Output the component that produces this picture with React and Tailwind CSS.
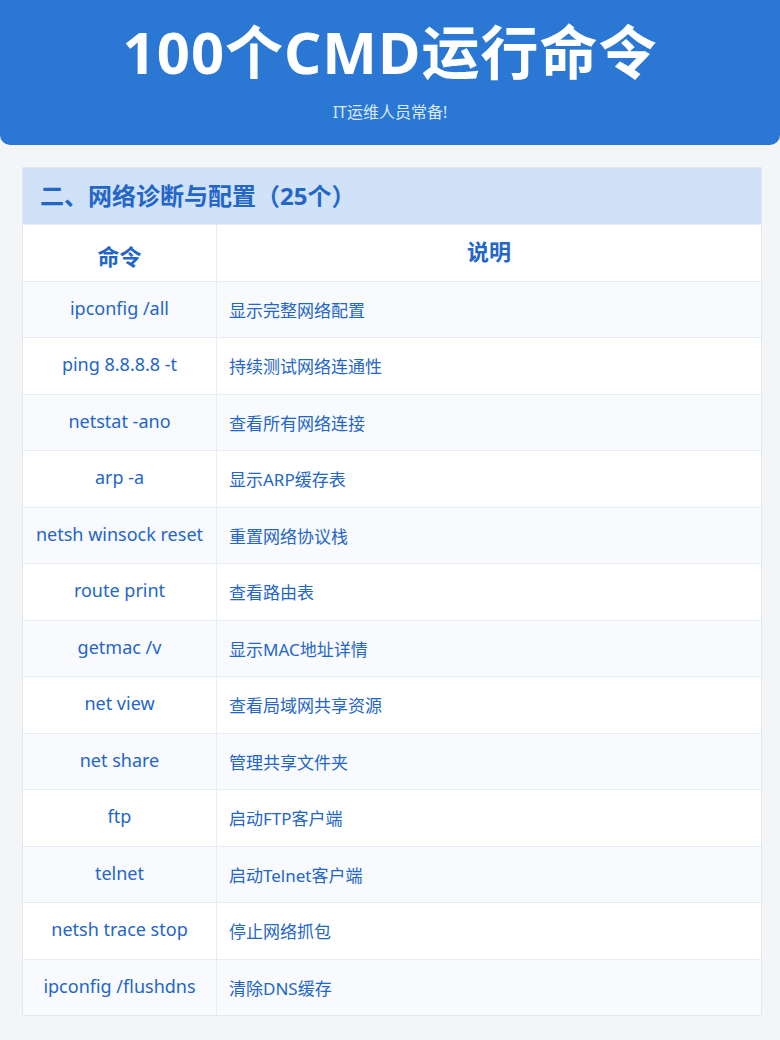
const rows=[["ipconfig /all","显示完整网络配置"],["ping 8.8.8.8 -t","持续测试网络连通性"],["netstat -ano","查看所有网络连接"],["arp -a","显示ARP缓存表"],["netsh winsock reset","重置网络协议栈"],["route print","查看路由表"],["getmac /v","显示MAC地址详情"],["net view","查看局域网共享资源"],["net share","管理共享文件夹"],["ftp","启动FTP客户端"],["telnet","启动Telnet客户端"],["netsh trace stop","停止网络抓包"],["ipconfig /flushdns","清除DNS缓存"]];
export default function App(){
return <div className="w-[780px] h-[1040px] bg-[#f4f5f6] overflow-hidden" style={{fontFamily:'"Noto Sans","Noto Sans CJK SC",sans-serif'}}>
<div className="h-[145px] bg-[#2b78d4] rounded-b-[10px] flex flex-col items-center text-white">
<div className="mt-[13px] text-[58px] font-bold leading-[78px] tracking-[1px]">100个CMD运行命令</div>
<div className="mt-[9px] text-[16px] leading-[24px] text-[#dce9fb]">IT运维人员常备!</div>
</div>
<div className="ml-[22px] mr-[18px] mt-[22px] border border-[#e3e8ef] bg-white">
<div className="h-[56px] bg-[#cfe2f8] flex items-center pl-[17px] text-[24px] font-bold text-[#2466c8]">二、网络诊断与配置（25个）</div>
<div className="grid grid-cols-[194px_1fr] h-[56.5px] border-t border-[#e8edf3] text-[#2466c8] font-bold text-[22px]">
<div className="flex items-center justify-center border-r border-[#e8edf3] pt-[8px]">命令</div>
<div className="flex items-center justify-center pb-[2px]">说明</div>
</div>
{rows.map((r,i)=><div key={i} className={`grid grid-cols-[194px_1fr] h-[56.5px] border-t border-[#e8edf3] text-[#2466c8] ${i%2===0?"bg-[#f8fafd]":"bg-white"}`}>
<div className="flex items-center justify-center border-r border-[#e8edf3] text-[18px] pb-[2px]">{r[0]}</div>
<div className="flex items-center pl-[12px] text-[17px] pt-[2px]">{r[1]}</div>
</div>)}
</div>
</div>}
